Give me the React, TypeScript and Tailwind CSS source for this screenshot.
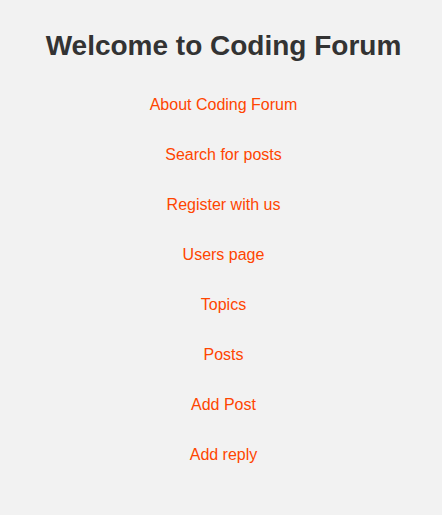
import React from 'react';

const links = [
  'About Coding Forum',
  'Search for posts',
  'Register with us',
  'Users page',
  'Topics',
  'Posts',
  'Add Post',
  'Add reply',
];

const App: React.FC = () => {
  return (
    <div className="min-h-[515px] bg-[#f2f2f2] pl-[5px] font-['Liberation_Sans',Arial,sans-serif] text-center">
      <h1 className="pt-[28px] text-[28px] leading-[36px] font-bold text-[#333333]">Welcome to Coding Forum</h1>
      <ul className="mt-[16px] flex flex-col">
        {links.map((label) => (
          <li key={label} className="h-[50px] leading-[50px] text-base">
            <a href="#" className="text-[#ff4500]">
              {label}
            </a>
          </li>
        ))}
      </ul>
    </div>
  );
};

export default App;
